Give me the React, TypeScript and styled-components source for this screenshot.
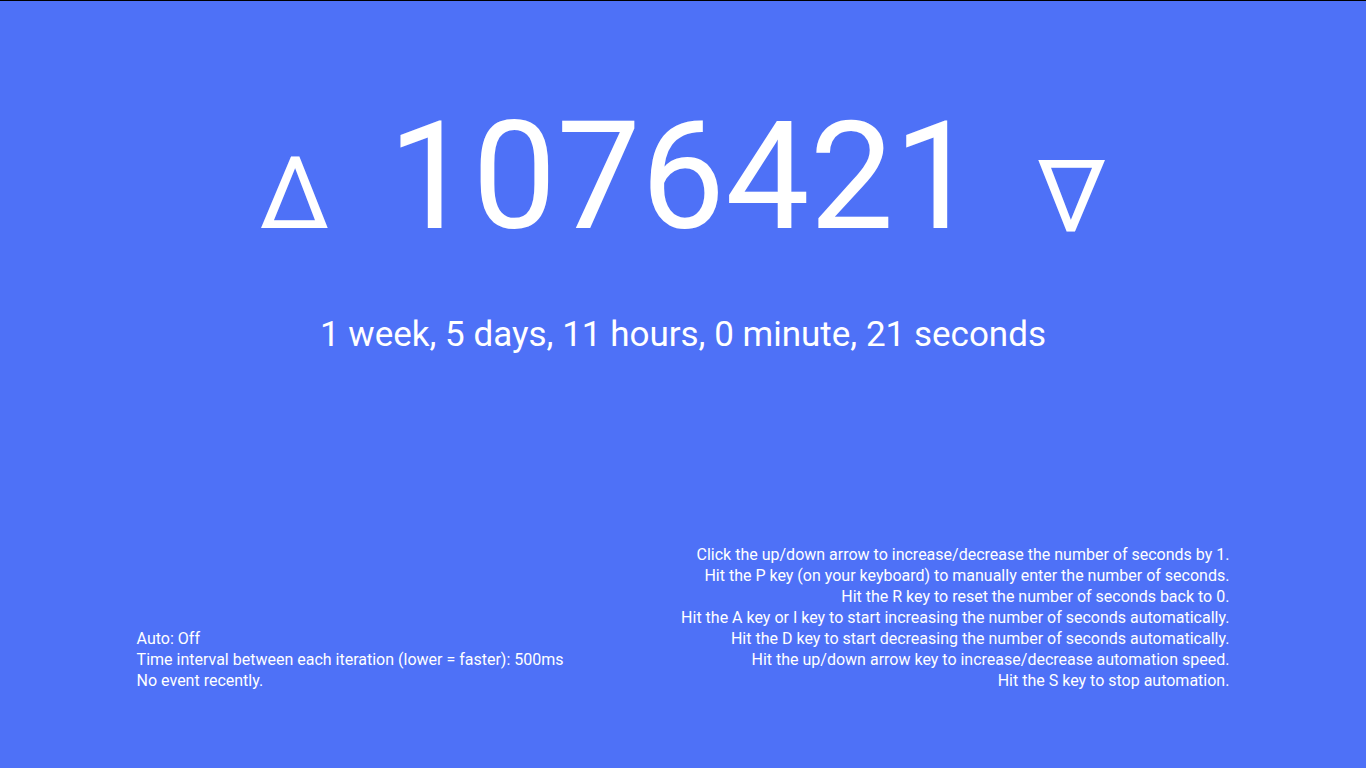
import React from "react";
import styled, { createGlobalStyle } from "styled-components";

const GlobalStyle = createGlobalStyle`
  * { box-sizing: border-box; }
  body {
    margin: 0;
    background: #4e71f7;
    color: #fff;
    font-family: Roboto, sans-serif;
    font-size: 16px;
    line-height: 21px;
  }
`;

const Page = styled.main`
  min-height: 100vh;
  display: flex;
  flex-direction: column;
  justify-content: space-between;
  padding: 82px 10% 77px;
  border-top: 1px solid #000;
`;

const Counter = styled.section`
  display: flex;
  flex-direction: column;
  align-items: center;
  gap: 43px;
`;

const CounterRow = styled.div`
  display: flex;
  align-items: baseline;
  justify-content: center;
  gap: 58px;
`;

const Count = styled.h1`
  margin: 0;
  font-size: 150px;
  line-height: 188px;
  font-weight: 400;
`;

const StepButton = styled.button<{ $down?: boolean }>`
  padding: 0;
  border: 0;
  background: none;
  color: inherit;
  font: 400 100px/118px Roboto, sans-serif;
  cursor: pointer;
  transform: ${(p) => (p.$down ? "rotate(180deg)" : "none")};
`;

const Duration = styled.p`
  margin: 0;
  font-size: 35px;
  line-height: 42px;
`;

const Footer = styled.footer`
  display: flex;
  align-items: flex-end;
  justify-content: space-between;
`;

const Notes = styled.div<{ $align: "left" | "right" }>`
  text-align: ${(p) => p.$align};
  p { margin: 0; }
`;

const status = [
  "Auto: Off",
  "Time interval between each iteration (lower = faster): 500ms",
  "No event recently.",
];

const help = [
  "Click the up/down arrow to increase/decrease the number of seconds by 1.",
  "Hit the P key (on your keyboard) to manually enter the number of seconds.",
  "Hit the R key to reset the number of seconds back to 0.",
  "Hit the A key or I key to start increasing the number of seconds automatically.",
  "Hit the D key to start decreasing the number of seconds automatically.",
  "Hit the up/down arrow key to increase/decrease automation speed.",
  "Hit the S key to stop automation.",
];

export default function App() {
  return (
    <>
      <GlobalStyle />
      <Page>
        <Counter>
          <CounterRow>
            <StepButton aria-label="Increase">∆</StepButton>
            <Count>1076421</Count>
            <StepButton $down aria-label="Decrease">∆</StepButton>
          </CounterRow>
          <Duration>1 week, 5 days, 11 hours, 0 minute, 21 seconds</Duration>
        </Counter>
        <Footer>
          <Notes $align="left">{status.map((t) => <p key={t}>{t}</p>)}</Notes>
          <Notes $align="right">{help.map((t) => <p key={t}>{t}</p>)}</Notes>
        </Footer>
      </Page>
    </>
  );
}
